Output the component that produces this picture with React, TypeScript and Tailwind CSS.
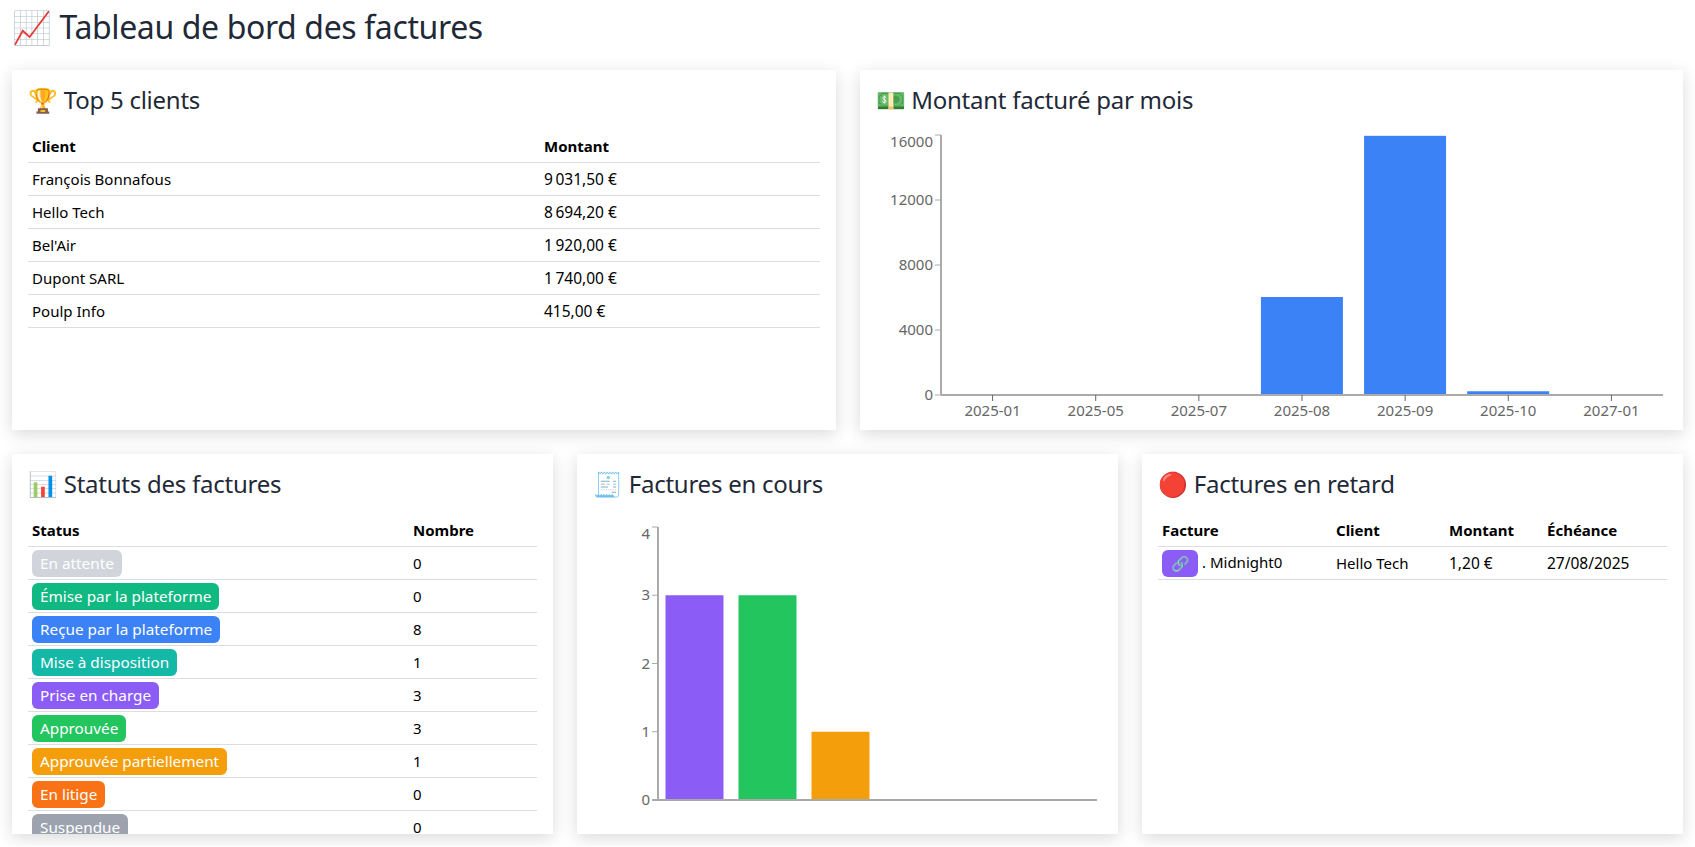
import React from 'react';

const topClients = [
  ['François Bonnafous', '9\u202f031,50 €'],
  ['Hello Tech', '8\u202f694,20 €'],
  ["Bel'Air", '1\u202f920,00 €'],
  ['Dupont SARL', '1\u202f740,00 €'],
  ['Poulp Info', '415,00 €'],
];

const statuses = [
  { label: 'En attente', count: 0, color: 'bg-[#d1d5db]' },
  { label: 'Émise par la plateforme', count: 0, color: 'bg-[#10b981]' },
  { label: 'Reçue par la plateforme', count: 8, color: 'bg-[#3b82f6]' },
  { label: 'Mise à disposition', count: 1, color: 'bg-[#14b8a6]' },
  { label: 'Prise en charge', count: 3, color: 'bg-[#8b5cf6]' },
  { label: 'Approuvée', count: 3, color: 'bg-[#22c55e]' },
  { label: 'Approuvée partiellement', count: 1, color: 'bg-[#f59e0b]' },
  { label: 'En litige', count: 0, color: 'bg-[#f97316]' },
  { label: 'Suspendue', count: 0, color: 'bg-[#9ca3af]' },
];

const Card: React.FC<{ title: string; children: React.ReactNode }> = ({ title, children }) => (
  <div className="bg-white p-4 overflow-hidden shadow-[0_4px_16px_rgba(0,0,0,0.15)] h-full">
    <h2 className="text-2xl tracking-[-0.25px] leading-7 text-[#1f2937] mb-4">{title}</h2>
    {children}
  </div>
);

const Th: React.FC<{ children: React.ReactNode; className?: string }> = ({ children, className }) => (
  <th className={`text-left font-bold px-1 py-0 h-[33px] border-b border-[#dcdde3] ${className ?? ''}`}>{children}</th>
);

const Td: React.FC<{ children: React.ReactNode; className?: string }> = ({ children, className }) => (
  <td className={`px-1 py-0 h-[33px] border-b border-[#dcdde3] whitespace-nowrap ${className ?? ''}`}>{children}</td>
);

const AXIS = '#aaaaaa';
const TICK = '#666666';

const MonthChart = () => {
  const months = ['2025-01', '2025-05', '2025-07', '2025-08', '2025-09', '2025-10', '2027-01'];
  const values = [0, 0, 0, 6030, 15950, 230, 0];
  const x0 = 65;
  const band = 103.14;
  const base = 265;
  const scale = 260 / 16000;
  return (
    <svg width="792" height="300" className="block">
      {values.map((v, i) => (
        <rect key={i} x={x0 + band * i + 10.5} y={base - v * scale} width="82" height={v * scale} fill="#3b82f6" />
      ))}
      <line x1={x0} y1="5" x2={x0} y2={base} stroke={AXIS} strokeWidth="2" />
      <line x1={x0} y1={base} x2="787" y2={base} stroke={AXIS} strokeWidth="2" />
      {[0, 4000, 8000, 12000, 16000].map((t) => {
        const y = base - t * scale;
        return (
          <g key={t}>
            <line x1={x0 - 6} y1={y} x2={x0} y2={y} stroke={AXIS} />
            <text x={x0 - 8} y={t === 16000 ? y + 12 : y + 5} textAnchor="end" fill={TICK} fontSize="15">{t}</text>
          </g>
        );
      })}
      {months.map((m, i) => {
        const x = x0 + band * (i + 0.5);
        return (
          <g key={m}>
            <line x1={x} y1={base} x2={x} y2={base + 6} stroke={TICK} />
            <text x={x} y={base + 21} textAnchor="middle" fill={TICK} fontSize="15">{m}</text>
          </g>
        );
      })}
    </svg>
  );
};

const CurrentChart = () => {
  const bars = [
    { v: 3, color: '#8b5cf6' },
    { v: 3, color: '#22c55e' },
    { v: 1, color: '#f59e0b' },
  ];
  const x0 = 65;
  const band = 73;
  const base = 286;
  const unit = 68.25;
  return (
    <svg width="509" height="300" className="block">
      {bars.map((b, i) => (
        <rect key={i} x={x0 + band * i + 7.5} y={base - b.v * unit} width="58" height={b.v * unit} fill={b.color} />
      ))}
      <line x1={x0} y1={base - 4 * unit} x2={x0} y2={base} stroke={AXIS} strokeWidth="2" />
      <line x1={x0 - 6} y1={base} x2="504" y2={base} stroke={AXIS} strokeWidth="2" />
      {[0, 1, 2, 3, 4].map((t) => {
        const y = base - t * unit;
        return (
          <g key={t}>
            <line x1={x0 - 6} y1={y} x2={x0} y2={y} stroke={AXIS} />
            <text x={x0 - 8} y={t === 4 ? y + 12 : y + 5} textAnchor="end" fill={TICK} fontSize="15">{t}</text>
          </g>
        );
      })}
    </svg>
  );
};

export default function App() {
  return (
    <div className="bg-white px-3 pt-3 pb-3 text-black text-[15px] leading-6 font-['Noto_Sans',sans-serif]">
      <h1 className="text-[32px] tracking-[-0.38px] leading-[30px] text-[#1f2937] mb-7">📈 Tableau de bord des factures</h1>

      <div className="grid grid-cols-2 gap-6 h-[360px]">
        <Card title="🏆 Top 5 clients">
          <table className="w-full table-fixed border-separate border-spacing-0">
            <thead>
              <tr>
                <Th className="w-[512px]">Client</Th>
                <Th>Montant</Th>
              </tr>
            </thead>
            <tbody>
              {topClients.map(([name, amount]) => (
                <tr key={name}>
                  <Td>{name}</Td>
                  <Td className="text-[15.5px]">{amount}</Td>
                </tr>
              ))}
            </tbody>
          </table>
        </Card>
        <Card title="💵 Montant facturé par mois">
          <MonthChart />
        </Card>
      </div>

      <div className="grid grid-cols-3 gap-6 h-[380px] mt-6">
        <Card title="📊 Statuts des factures">
          <table className="w-full table-fixed border-separate border-spacing-0">
            <thead>
              <tr>
                <Th className="w-[381px]">Status</Th>
                <Th>Nombre</Th>
              </tr>
            </thead>
            <tbody>
              {statuses.map((s) => (
                <tr key={s.label}>
                  <Td>
                    <span className={`block w-fit h-[27px] px-2 rounded-md text-white text-[15.3px] leading-[27px] ${s.color}`}>{s.label}</span>
                  </Td>
                  <Td>{s.count}</Td>
                </tr>
              ))}
            </tbody>
          </table>
        </Card>
        <Card title="🧾 Factures en cours">
          <CurrentChart />
        </Card>
        <Card title="🔴 Factures en retard">
          <table className="w-full table-fixed border-separate border-spacing-0">
            <thead>
              <tr>
                <Th className="w-[174px]">Facture</Th>
                <Th className="w-[113px]">Client</Th>
                <Th className="w-[98px]">Montant</Th>
                <Th>Échéance</Th>
              </tr>
            </thead>
            <tbody>
              <tr>
                <Td>
                  <span className="inline-flex items-center justify-center align-top w-9 h-[27px] rounded-md bg-[#8b5cf6] mr-1">🔗</span>
                  . Midnight0
                </Td>
                <Td>Hello Tech</Td>
                <Td className="text-[15.5px]">1,20 €</Td>
                <Td className="text-[15.5px]">27/08/2025</Td>
              </tr>
            </tbody>
          </table>
        </Card>
      </div>
    </div>
  );
}
